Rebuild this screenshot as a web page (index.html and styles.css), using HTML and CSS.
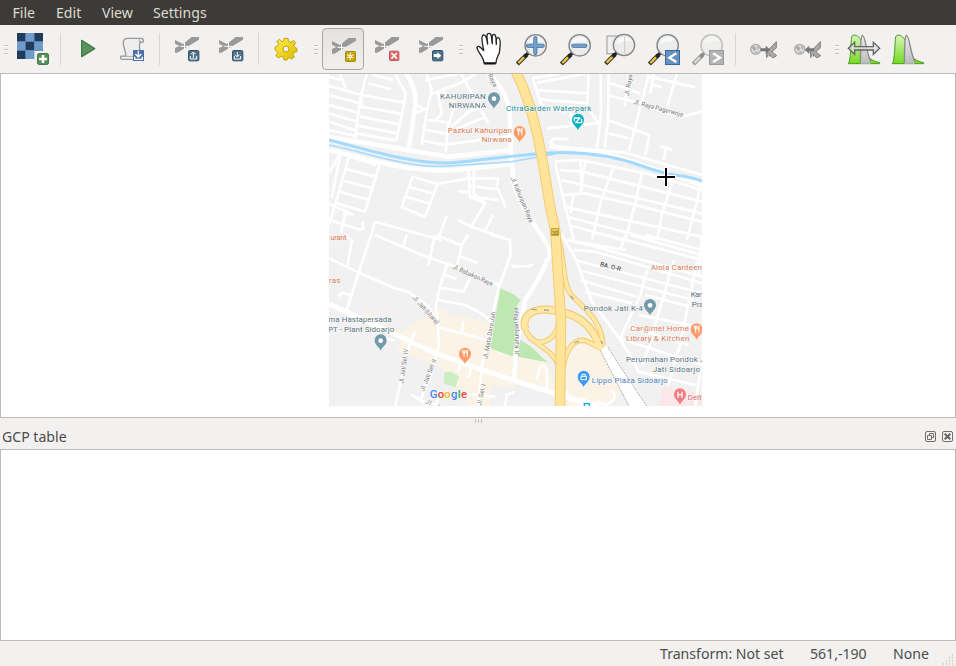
FILE: index.html
```
<!DOCTYPE html>
<html lang="en">
<head>
<meta charset="utf-8">
<title>Georeferencer</title>
<link rel="stylesheet" href="styles.css">
</head>
<body>
<svg class="defs" width="0" height="0">
  <defs>
    <linearGradient id="gGreen" x2="0" y2="1"><stop stop-color="#d8f5bd"/><stop offset="1" stop-color="#73dc1c"/></linearGradient>
    <linearGradient id="gGray" x2="0" y2="1"><stop stop-color="#eee"/><stop offset="1" stop-color="#bbb"/></linearGradient>
    <linearGradient id="gGear" x2="1" y2="1"><stop stop-color="#fff04c"/><stop offset="1" stop-color="#d9b800"/></linearGradient>
    <g id="gcp">
      <path d="M0 9 24 21 50 0H72V8L7 47H0V33L13 27 0 20Z" fill="#999"/>
      <path d="M16 28H40M28.500 16V40" stroke="#fff" stroke-width="3"/>
    </g>
    <g id="lens">
      <path d="M3 90 31 62" stroke="#333" stroke-width="13"/>
      <path d="M6 87 23 70" stroke="#f7c63b" stroke-width="7"/>
      <path d="M26 67 37 56" stroke="#222" stroke-width="10"/>
      <circle cx="58" cy="34" r="32" fill="#e9ebea" fill-opacity=".88" stroke="#858585" stroke-width="4"/>
      <path d="M34 30a25 25 0 0 1 46-8Q57 20 34 30" fill="#fff" opacity=".65"/>
    </g>
    <g id="badge"><rect x="1.500" y="1.500" width="31" height="31" rx="4" fill="#4e7188" stroke="#315069" stroke-width="3"/></g>
    <g id="link">
      <circle cx="17" cy="18" r="15" fill="#ddd" stroke="#aaa" stroke-width="4"/>
      <path d="M5 12 13 7 20 17 12 23ZM20 5 28 13 24 20ZM10 29 21 24 26 29" fill="#aaa"/>
      <path d="M50 30 78 0M47 21 78 38M58 39 71 9" stroke="#777" stroke-width="5"/>
      <path d="M57 18 79-5V14L65 25 80 37 69 44 55 31 50 43 50 24Z" fill="#aaa" stroke="#858585" stroke-width="3"/>
    </g>
    <g id="hist">
      <path d="M0 86C8 80 7 22 10 7 12-2 29-1 38 16 48 62 65 79 94 84V87H0Z" fill="url(#gGreen)" stroke="#4d9c20" stroke-width="3"/>
      <path d="M36 87C37 47 36 5 42 2 51 1 53 48 67 83V87Z" fill="url(#gGray)"/>
      <path d="M36 85C37 47 36 5 42 2 51 1 53 52 68 82" fill="none" stroke="#8a8a8a" stroke-width="4"/>
    </g>
    <g id="pin"><path d="M0 28C-6 15-18 11-18-3A18 18 0 0 1 18-3C18 11 6 15 0 28Z"/></g>
    <g id="food" fill="none" stroke="#fff" stroke-width="3"><path d="M-7-12V-4Q-3 0 0-4V-12M-3-12V9M7 9V-12Q2-8 4-1H7"/></g>
  </defs>
</svg>

<nav class="menubar"><span class="m-file">File</span><span class="m-edit">Edit</span><span class="m-view">View</span><span class="m-set">Settings</span></nav>

<div class="toolbar">
  <i class="grip g1"></i>
  <button class="tool" aria-label="Open raster"><svg viewBox="33 81 132 132">
    <rect x="51" y="99" width="78" height="78" fill="#6f9bca"/>
    <path d="M51 99h25v25H51zM103 99h26v25h-26zM77 125h25v25H77zM51 152h25v25H51z" fill="#223b5b"/>
    <path d="M51 124.500H129M51 151H129M76.500 99V177M103 99V177" stroke="#527fae" stroke-width="1.500"/>
    <path d="M103 153h26v24h-26z" fill="#f2f1f0"/>
    <rect x="112.500" y="160.500" width="33" height="33" rx="5" fill="#568c55" stroke="#407a40" stroke-width="3"/><path d="M117 177H141M129 165V189" stroke="#fff" stroke-width="8"/></svg></button>
  <i class="sep"></i>
  <button class="tool" aria-label="Start"><svg viewBox="198 81 132 132"><path d="M245 121V170L284 146Z" fill="#5a965a" stroke="#3f7a48" stroke-width="4" stroke-linejoin="round"/></svg></button>
  <button class="tool" aria-label="Generate script"><svg viewBox="330 81 132 132">
    <path d="M377 168C378 150 368 140 370 125Q372 115 383 115H424Q432 117 430 125 427 130 420 125 416 140 423 178H367Q360 177 362 169Z" fill="#eee" stroke="#999" stroke-width="4"/><path d="M363 169H401M418 116V125" stroke="#aaa" stroke-width="3"/>
    <rect x="399" y="150" width="33" height="33" fill="#4b6faa"/><path d="M415 152V168M406 162 415 171 424 162M404 170V178H427V170" fill="none" stroke="#fff" stroke-width="4"/></svg></button>
  <i class="sep"></i>
  <button class="tool" aria-label="Load points"><svg viewBox="495 81 132 132"><use href="#gcp" x="525" y="111"/><use href="#badge" x="564" y="150"/><path d="M580 174V158M573 163 580 156 587 163M571 168V177H590V168" fill="none" stroke="#fff" stroke-width="3"/></svg></button>
  <button class="tool" aria-label="Save points"><svg viewBox="627 81 132 132"><use href="#gcp" x="657" y="111"/><use href="#badge" x="696" y="150"/><path d="M712 156V170M705 164 712 171 719 164M703 168V177H722V168" fill="none" stroke="#fff" stroke-width="3"/></svg></button>
  <i class="sep"></i>
  <button class="tool" aria-label="Transformation settings"><svg viewBox="27 15 132 132"><path d="M87 49H99L101 58 108 61 116 55 122 62 117 70 120 77 126 79V89L117 91 114 97 118 105 109 112 102 106 98 112 95 114H87L84 105 78 103 70 108 62 101 68 92 65 87 60 84V75L68 72 71 66 65 58 73 52 81 59 86 57Z" fill="url(#gGear)" stroke="#bd9907" stroke-width="2.500"/><circle cx="93" cy="81" r="9" fill="#f2f1f0" stroke="#c4a000" stroke-width="3"/></svg></button>
  <i class="grip g2"></i>
  <button class="tool active" aria-label="Add point"><svg viewBox="198 15 132 132"><use href="#gcp" x="231" y="48"/><rect x="271.500" y="88.500" width="30" height="30" rx="3" fill="#c4a30b" stroke="#a98b00" stroke-width="3"/><path d="M286 92V114M276 98 296 108M296 98 276 108" stroke="#fff" stroke-width="3"/><circle cx="286" cy="103" r="5" fill="#fff"/><circle cx="286" cy="103" r="2" fill="#c4a30b"/></svg></button>
  <button class="tool" aria-label="Delete point"><svg viewBox="330 15 132 132"><use href="#gcp" x="360" y="45"/><rect x="403.500" y="87.500" width="28" height="28" rx="3" fill="#dc6767" stroke="#cf5050" stroke-width="3"/><path d="M409 93 426 110M426 93 409 110" stroke="#fff" stroke-width="5"/></svg></button>
  <button class="tool" aria-label="Move point"><svg viewBox="462 15 132 132"><use href="#gcp" x="492" y="45"/><use href="#badge" x="531" y="84"/><path d="M536 96H547V90L559 101 547 111V105H536Z" fill="#fff"/></svg></button>
  <i class="grip g3"></i>
  <button class="tool" aria-label="Pan"><svg viewBox="633 15 132 132"><path d="M687 123C687 105 666 89 666 76 670 68 678 77 686 86 684 69 675 42 685 39 694 37 696 56 698 66 697 51 692 34 702 34 711 33 709 51 712 65 712 50 709 37 717 37 726 38 722 56 724 67 724 55 722 46 730 47 740 49 735 76 733 92 729 103 723 108 723 123Z" fill="#fff" stroke="#222" stroke-width="4" stroke-linejoin="round"/><path d="M687 125H722" stroke="#111" stroke-width="5"/></svg></button>
  <button class="tool" aria-label="Zoom in"><svg viewBox="30 15 132 132"><use href="#lens" x="49" y="36"/><path d="M84 71H128M106 49V93" stroke="#376594" stroke-width="12" stroke-linecap="round"/><path d="M84 71H128M106 49V93" stroke="#729fcf" stroke-width="8" stroke-linecap="round"/></svg></button>
  <button class="tool" aria-label="Zoom out"><svg viewBox="162 15 132 132"><use href="#lens" x="181" y="36"/><path d="M220 71H256" stroke="#376594" stroke-width="12" stroke-linecap="round"/><path d="M220 71H256" stroke="#729fcf" stroke-width="8" stroke-linecap="round"/></svg></button>
  <button class="tool" aria-label="Zoom to layer"><svg viewBox="294 15 132 132"><rect x="321" y="42" width="53" height="53" fill="#eee" stroke="#999" stroke-width="3"/><use href="#lens" x="314" y="35"/><path d="M374 45V94" stroke="#ccc" stroke-width="3"/></svg></button>
  <button class="tool" aria-label="Zoom last"><svg viewBox="426 15 132 132"><use href="#lens" x="445" y="36"/><rect x="496.500" y="85.500" width="42" height="42" fill="#6292c4" stroke="#3c6795" stroke-width="3"/><path d="M529 94 508 107 529 120" fill="none" stroke="#fff" stroke-width="7"/></svg></button>
  <button class="tool" aria-label="Zoom next" disabled><svg viewBox="558 15 132 132"><g class="faded"><use href="#lens" x="577" y="36"/></g><rect x="628.500" y="85.500" width="42" height="42" fill="#b3b3b3" stroke="#999" stroke-width="3"/><path d="M639 94 660 107 639 120" fill="none" stroke="#fff" stroke-width="7"/></svg></button>
  <i class="sep wide"></i>
  <button class="tool" aria-label="Link to QGIS" disabled><svg viewBox="36 15 132 132"><use href="#link" x="60" y="64"/><path d="M92 79H107V71L121 83 107 96V88H92Z" fill="#777"/></svg></button>
  <button class="tool" aria-label="Link to georeferencer" disabled><svg viewBox="168 15 132 132"><use href="#link" x="192" y="64"/><path d="M253 79H238V71L224 83 238 96V88H253Z" fill="#777"/></svg></button>
  <i class="grip g4"></i>
  <button class="tool" aria-label="Full histogram stretch"><svg viewBox="336 15 132 132"><use href="#hist" x="355" y="38"/><path d="M355 79 374 61V74H430V61L449 79 430 97V84H374V97Z" fill="#ddd" fill-opacity=".82" stroke="#666" stroke-width="4"/></svg></button>
  <button class="tool" aria-label="Local histogram stretch"><svg viewBox="468 15 132 132"><use href="#hist" x="487" y="38"/></svg></button>
</div>

<main class="canvas">
<svg class="map" viewBox="329 74 373 332" width="373" height="332">
  <rect x="329" y="74" width="373" height="332" fill="#f1f1f1"/>
  <!-- built-up areas and parks -->
  <g transform="translate(325 235) scale(.33333)">
    <path d="M115 229 145 240 150 260 230 290 300 245 330 215 368 230 365 248 410 240 500 268V335L570 362V460L500 450 495 515H425V475L400 460 350 400 215 345 235 310 115 270Z" fill="#faf3e6"/>
    <path d="M526 160 570 180V367L496 340Z" fill="#bee8b1"/>
    <path d="M358 412Q375 403 402 425L391 456 357 446Z" fill="#cdeec1"/>
  </g>
  <g transform="translate(512 235) scale(.33333)">
    <path d="M0 176 26 194 0 235ZM25 315 55 333 108 383 0 362V320Z" fill="#bee8b1"/>
    <path d="M165 340Q185 302 230 303L270 335 325 450V480L290 515H160ZM0 362 105 382 130 470 0 440Z" fill="#faf3e6"/>
    <path d="M455 457 570 475V515H440Z" fill="#fae7e9"/>
  </g>
  <!-- local streets -->
  <g class="street" transform="translate(325 70) scale(.33333)">
    <path d="M12 48 110 75 238 98M125 12 105 90 90 205M45 12 62 55M12 20 55 32M130 40 197 58M140 14 205 30M112 82 107 110 230 132M105 140 225 163M100 167 218 190M96 190 215 212M12 75 105 100M12 105 100 128M12 130 98 155M12 155 94 182M12 180 90 198"/>
    <path d="M210 12 242 70 235 115 215 208M305 12 320 60 305 125 290 225M300 30 400 12M320 72 400 42 452 12M340 70 350 130 330 155M307 150 370 157 362 248M300 180 366 190 482 140M295 213 362 224 560 198M408 12 450 85 490 160M350 60 390 100 372 165M380 170 430 125 475 110M275 105 300 118 275 128"/>
    <path d="M12 310 48 245 20 385M75 250 20 440M165 280 120 425M75 260 155 285M65 298 150 320M58 332 140 355M45 365 132 390M30 398 120 425M20 440 12 465M12 400 85 435M55 420 70 425 55 450M262 320 230 412 300 440 338 342ZM250 350 320 370M242 380 310 400M338 342 430 325 520 325 515 350M430 300 435 380 480 400 435 475M447 300 446 370 480 400M435 348 520 358 543 415M400 362 430 367M440 380 520 390"/>
    <path d="M150 455 350 510M150 455 135 510M365 438 340 505M400 450 440 470 540 505M503 435 480 485M12 450 110 480M112 455 115 480M60 425 48 490"/>
  </g>
  <g class="street" transform="translate(512 70) scale(.33333)">
    <path d="M62 25 78 75 90 110 160 125M75 38 220 12M70 60 230 70M80 88 228 100M110 120 180 108M60 25 140 12M230 12 225 110 260 160 105 175M175 125 178 165M170 208 125 206 115 217 125 228 340 248 570 315"/>
    <path d="M266 12 267 130 255 235M290 12 288 150 278 235M295 40 385 70M292 78 360 93 435 120 510 140 570 125M350 12 338 110M410 15 350 245M410 20 550 52M425 12 415 70M495 12 465 110M288 150 412 195 400 255M290 190 350 205M415 45 450 50M445 228 480 240M462 233 455 270"/>
    <path d="M127 275 205 270 400 310 570 360M130 280 150 370 185 510M145 300 210 305 570 395M148 330 570 430M148 375 220 370 350 400 570 455M155 410 570 500M165 440 430 510M170 465 330 510M205 275 210 365M220 275 205 365M305 290 265 400 240 510M390 310 370 400 340 510M480 340 450 430 435 510M565 350 525 510M185 375 175 430"/>
  </g>
  <g class="street" transform="translate(325 235) scale(.33333)">
    <path d="M60 0 80 15 68 93M138 0 65 225M12 70 95 110 210 160 250 170 310 215 338 270 342 330 325 400 285 500M150 0 310 68 385 92 520 150M245 0 235 35M330 0 310 92M335 0 410 32 397 90M405 65 458 83M410 30 430 0M500 0 555 15 557 60 522 155 498 260 470 400 460 515M365 90 345 155 332 215 340 270M360 120 395 132M345 158 415 170 438 125M340 195 420 210 470 235 500 260M40 185 50 173 75 180M340 278 500 318M415 260 410 290M270 290 245 350 225 450 210 515M400 410 408 380M430 430 440 390M260 480 320 515M290 500 340 510M410 475 510 485M540 515 545 480 570 470M340 490 330 515M560 90 570 95M180 310 210 316"/>
  </g>
  <g class="street" transform="translate(512 235) scale(.33333)">
    <path d="M150 0 190 70 240 200 325 315 365 380M165 15 250 35 570 125M185 45 250 50 570 145M190 75 570 175M200 105 545 195M205 135 375 185M220 170 360 205M340 0 325 45M405 105 385 180 325 310M485 75 455 185 420 300M555 80 520 250 500 350M400 0 570 45M285 0 570 75M400 180 535 215M380 240 535 270M350 275 530 330M320 310 570 390M365 380 380 410 550 450M500 340 470 450M565 400 550 515M425 300 390 390M570 0 560 120M355 0 570 60M190 20 340 45M0 95 50 93 65 88M75 435 82 400Q92 382 104 403L105 470M300 465Q320 490 285 510L255 500M165 465Q160 490 210 493L260 510"/>
  </g>
  <!-- wider roads -->
  <g class="road">
    <path d="M406 73Q418 91 415 108L408 153M329 137Q359 142 408 150T446 157L512 150M329 150C381 162 410 173 455 170L512 164M488 73Q510 93 510 120T514 185Q520 205 538 230T547 260Q542 275 525 300L516 350 514 380M550 146 615 156 702 185"/>
    <path class="avenue" d="M329 304 390 332 435 353 500 376 550 392 605 410"/>
  </g>
  <path d="M600 350 607 346 648 408H630Z" fill="#fff"/>
  <path d="M608 347Q625 375 649 409" class="rail"/><path d="M600 350 630 408" class="rail"/>
  <g fill="none" stroke="#a3daff"><path d="M329 140C362 148 410 164 450 163 485 160 514 155 550 153S615 156 645 167 680 173 702 181" stroke-width="3"/><path d="M329 145C370 153 410 169 448 166L510 162 555 154" stroke-width="1.500"/></g>
  <!-- highway -->
  <g transform="translate(512 235) scale(.33333)" fill="none" stroke-linejoin="round">
    <g stroke="#f4c667">
      <path d="M265 340C240 262 190 232 110 224 55 221 30 245 39 282" stroke-width="24"/>
      <path d="M38 275C48 318 75 327 100 319 128 308 138 285 142 255M40 285C65 335 120 335 144 400M152 405C160 340 190 305 225 319L268 340M135 0C160 60 148 140 178 180 220 225 265 250 274 330" stroke-width="16"/>
    </g>
    <g stroke="#ffe8a5">
      <path d="M266 343C240 262 190 232 110 224 55 221 30 245 39 284" stroke-width="18"/>
      <path d="M38 275C48 318 75 327 100 319 128 308 138 285 142 255M40 285C65 335 120 335 144 400M152 405C160 340 190 305 225 319L268 340M135 0C160 60 148 140 178 180 220 225 265 250 274 332" stroke-width="11"/>
    </g>
  </g>
  <g fill="none">
    <path d="M515 70C534 106 542 155 548 194S555 213 557 260L561 320 560 408" stroke="#f5cb74" stroke-width="10.500"/>
    <path d="M515 70C534 106 542 155 548 194S555 213 557 260L561 320 560 408" stroke="#ffe49a" stroke-width="8.500"/>
  </g>
  <rect x="551.500" y="228.500" width="7" height="7" fill="#e8c95a" stroke="#c9a83e"/><text x="552" y="234.500" class="shield">20</text>
  <!-- place labels -->
  <g class="label slate" transform="translate(325 70) scale(.33333)">
    <text x="345" y="87" textLength="137">KAHURIPAN</text><text x="371" y="115" textLength="112">NIRWANA</text>
    <use href="#pin" x="507" y="88" fill="#7399ab"/><circle cx="507" cy="86" r="7" fill="#fff"/>
    <g class="orange"><text x="368" y="188" textLength="193">Pazkul Kahuripan</text><text x="470" y="215" textLength="90">Nirwana</text><text x="16" y="511" textLength="49">urant</text></g>
  </g>
  <g class="label" transform="translate(512 70) scale(.33333)">
    <text class="teal" x="-18" y="122" textLength="256">CitraGarden Waterpark</text>
    <use href="#pin" x="198" y="152" fill="#00b1c3"/><path d="M187 153V144H203M209 147V158H193M190 158 205 143" fill="none" stroke="#fff" stroke-width="4"/>
    <use href="#pin" x="23" y="189" fill="#ff9b69"/><use href="#food" x="23" y="187"/>
    <g class="roadname"><text transform="translate(364 101) rotate(15)" textLength="153">Jl. Raya Pagerwoja</text><text transform="translate(350 78) rotate(-80)" textLength="65">Jl. Raya</text><text transform="translate(-4 325) rotate(67)" textLength="145">Jl. Kahuripan Raya</text><text transform="translate(-72 14) rotate(66)" textLength="42">Raya</text></g>
  </g>
  <g class="label slate" transform="translate(325 235) scale(.33333)">
    <text class="orange" x="12" y="144" textLength="34">ras</text>
    <text x="10" y="261" textLength="190">ma Hastapersada</text><text x="9" y="290" textLength="199">PT - Plant Sidoarjo</text>
    <use href="#pin" x="167" y="319" fill="#7399ab"/><circle cx="167" cy="317" r="7" fill="#fff"/>
    <use href="#pin" x="420" y="359" fill="#ff9b69"/><use href="#food" x="420" y="357"/>
    <g class="roadname"><text transform="translate(382 100) rotate(24)" textLength="130">Jl. Babakan Raya</text><text transform="translate(262 189) rotate(48)" textLength="108">Jl. Jati (Utara)</text><text transform="translate(235 446) rotate(-82)" textLength="105">Jl. Jati Sel. IV</text><text transform="translate(297 470) rotate(-68)" textLength="102">Jl. Jati Sel. II</text><text transform="translate(487 372) rotate(-80)" textLength="143">Jl. Mata Dara Jati</text><text transform="translate(468 512) rotate(-78)" textLength="65">Jl. Sel. I</text><text transform="translate(300 504) rotate(25)" textLength="43">Jl. J</text></g>
    <text class="google" x="314" y="488" textLength="112"><tspan fill="#4285f4">G</tspan><tspan fill="#ea4335">o</tspan><tspan fill="#fbbc05">o</tspan><tspan fill="#4285f4">g</tspan><tspan fill="#34a853">l</tspan><tspan fill="#ea4335">e</tspan></text>
  </g>
  <g class="label slate" transform="translate(512 235) scale(.33333)">
    <g class="orange"><text x="416" y="105" textLength="154">Aiola Canteen</text><text x="355" y="288" textLength="176">Car@mel Home</text><text x="342" y="317" textLength="190">Library &amp; Kitchen</text></g>
    <text x="536" y="187" textLength="45">Kam</text><text x="539" y="216" textLength="36">Pra</text>
    <text x="215" y="227" textLength="178">Pondok Jati K-4</text><use href="#pin" x="414" y="213" fill="#7399ab"/><circle cx="414" cy="211" r="7" fill="#fff"/>
    <use href="#pin" x="554" y="286" fill="#ff9b69"/><use href="#food" x="554" y="284"/>
    <text x="342" y="382" textLength="235">Perumahan Pondok J</text><text x="422" y="410" textLength="142">Jati Sidoarjo</text>
    <text class="blue" x="239" y="443" textLength="228">Lippo Plaza Sidoarjo</text><use href="#pin" x="215" y="428" fill="#3f9bf3"/><path d="M207 424H223V434H207ZM210 423V418H220V423" fill="none" stroke="#fff" stroke-width="3"/>
    <use href="#pin" x="504" y="481" fill="#f77b82"/><path d="M498 470V488M510 470V488M498 479H510" stroke="#fff" stroke-width="4"/><text class="red" x="527" y="494" textLength="55">Delta</text>
    <rect x="217" y="506" width="15" height="15" fill="#fff" stroke="#00b0df" stroke-width="4"/>
    <g class="roadname"><text class="dark" transform="translate(263 93) rotate(14)" textLength="64">BA. O-R</text><text transform="translate(22 362) rotate(-92)" textLength="145">Jl. Kahuripan Raya</text></g>
    <g stroke="#a3a693" stroke-width="4"><path d="M58 223 74 224M96 225 111 226M176 182 184 193M187 324 201 318M267 317 272 328"/></g>
  </g>
  <path d="M656 177H676M666 167V187" stroke="#fff" stroke-width="4"/><path d="M657 177H675M666 168V186" stroke="#000" stroke-width="2"/>
</svg>
</main>
<div class="splitter"><i></i><i></i><i></i></div>
<header class="dock-title"><span>GCP table</span><span class="dock-buttons">
  <svg width="11" height="11" viewBox="0 0 11 11"><rect x=".5" y=".5" width="10" height="10" rx="1.500" fill="none" stroke="#6f6f6f"/><path d="M4.500 4.500V2.500H8.500V6.500H6.500M2.500 4.500H6.500V8.500H2.500Z" fill="none" stroke="#6f6f6f"/></svg>
  <svg width="11" height="11" viewBox="0 0 11 11"><rect x=".5" y=".5" width="10" height="10" rx="1.500" fill="none" stroke="#6f6f6f"/><path d="M2.700 2.700 8.300 8.300M8.300 2.700 2.700 8.300" stroke="#666" stroke-width="2"/></svg>
</span></header>
<section class="table"></section>
<footer class="status"><span class="s-transform">Transform: Not set</span><span class="s-coord">561,-190</span><span class="s-none">None</span><svg class="size-grip" width="12" height="12" viewBox="0 0 12 12"><path d="M9 1h1M9 4h1M6 4h1M9 7h1M6 7h1M3 7h1M9 10h1M6 10h1M3 10h1M0 10h1" stroke="#c3c0bd" stroke-width="1.500"/></svg></footer>
</body>
</html>
```
FILE: styles.css
```
* { box-sizing: border-box; }
body {
  margin: 0;
  width: 956px;
  height: 666px;
  overflow: hidden;
  display: flex;
  flex-direction: column;
  background: #f2f1f0;
  color: #4c4c4c;
  font: 14.1px/20px "Noto Sans", "Open Sans", sans-serif;
}
.defs { position: absolute; }
.menubar {
  height: 25px;
  flex: none;
  display: flex;
  padding: 3px 0 0 12.5px;
  background: #3c3b37;
  color: #dfdbd2;
  white-space: nowrap;
}
.menubar span { flex: none; }
.m-file { width: 43.5px; }
.m-edit { width: 46px; }
.m-view { width: 51px; }
.toolbar { height: 48px; flex: none; display: flex; align-items: center; }
.tool {
  width: 44px;
  height: 44px;
  flex: none;
  padding: 0;
  border: 0;
  background: none;
}
.tool svg { display: block; width: 44px; height: 44px; }
.active {
  width: 42px;
  height: 42px;
  margin: 1px;
  border: 1px solid #aaa6a2;
  border-radius: 4px;
  background: linear-gradient(#e3e2e0, #f1f0ef);
}
.active > svg { margin: -2px; }
.sep { width: 11px; height: 32px; flex: none; background: linear-gradient(#d9d7d5, #d9d7d5) 5px 0 / 1px 100% no-repeat; }
.wide { width: 12px; }
.grip { height: 9px; flex: none; margin-top: 1px; background: repeating-linear-gradient(#c5c2bf 0 1px, #fbfbfb 1px 2px, transparent 2px 4px) content-box; }
.g1 { width: 11px; padding: 0 3px 0 4px; }
.g2, .g3 { width: 13px; padding: 0 3px 0 6px; }
.g4 { width: 12px; padding: 0 3px 0 5px; }
.faded { opacity: .48; filter: grayscale(1); }
.canvas {
  height: 345px;
  flex: none;
  display: flex;
  padding-left: 328px;
  border: 1px solid #bebbb8;
  background: #fff;
}
.map { display: block; flex: none; overflow: hidden; }
.street { fill: none; stroke: #fff; stroke-width: 8; stroke-linejoin: round; }
.road { fill: none; stroke: #fff; stroke-width: 4.5; }
.avenue { stroke-width: 5; }
.rail { fill: none; stroke: #888; stroke-width: .7; stroke-dasharray: 2 1; }
.shield { font: 5.5px Roboto, sans-serif; fill: #665c2e; }
.label { font: 24px Roboto, sans-serif; }
.label text { paint-order: stroke; stroke: #fff; stroke-opacity: .65; stroke-width: 3px; }
.slate { fill: #587480; }
.orange { fill: #da7954; }
.teal { fill: #168b99; }
.blue { fill: #4e82bb; }
.red { fill: #d8666f; }
.roadname { font-size: 19px; fill: #777; }
.dark { fill: #555; font-weight: 500; }
.label .google { font: 500 34px Roboto, sans-serif; }
.splitter { height: 8px; flex: none; display: flex; justify-content: center; gap: 2px; padding-top: 1px; }
.splitter i { width: 1px; height: 4px; background: #c2bfbc; }
.dock-title {
  height: 23px;
  flex: none;
  display: flex;
  justify-content: space-between;
  padding: 1px 3px 0 2px;
}
.dock-buttons { display: flex; gap: 6px; padding-top: 4px; }
.table { height: 192px; flex: none; border: 1px solid #bebbb8; background: #fff; }
.status { height: 25px; flex: none; display: flex; padding: 3px 0 0 660px; white-space: nowrap; }
.status span { flex: none; }
.s-transform { width: 150px; }
.s-coord { width: 83px; }
.s-none { width: 50px; }
.size-grip { flex: none; margin-top: 10px; }
```
